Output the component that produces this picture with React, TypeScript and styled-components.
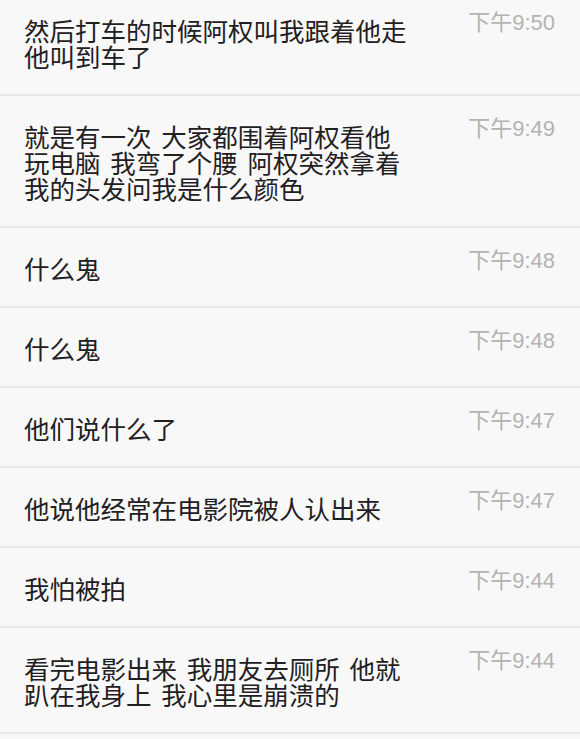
import React from "react";
import styled, { createGlobalStyle } from "styled-components";

const GlobalStyle = createGlobalStyle`
  html, body {
    margin: 0;
    padding: 0;
    background: #f7f8f7;
  }
  body {
    font-family: "Noto Sans CJK SC", "Noto Sans", sans-serif;
  }
`;

const List = styled.div`
  display: flex;
  flex-direction: column;
  width: 580px;
  height: 739px;
  overflow: hidden;
  background: #f7f8f7;
`;

const Row = styled.div`
  display: flex;
  justify-content: space-between;
  align-items: flex-start;
  padding: 27px 25px 25px 24px;
  border-bottom: 2px solid #e6e7e6;
  flex-shrink: 0;

  &:first-child {
    padding-top: 17px;
  }
`;

const Message = styled.div`
  display: flex;
  flex-direction: column;
  font-family: "Noto Sans CJK SC", sans-serif;
  font-size: 25.5px;
  line-height: 26px;
  word-spacing: 4px;
  color: #1f201f;
  white-space: pre;
`;

const Line = styled.span`
  display: block;
`;

const Time = styled.div`
  font-family: "Liberation Sans", "Noto Sans CJK SC", sans-serif;
  font-size: 22px;
  line-height: 24px;
  color: #b2b3b2;
  margin-top: -6px;
  white-space: nowrap;
`;

type Msg = { lines: string[]; time: string };

const messages: Msg[] = [
  { lines: ["然后打车的时候阿权叫我跟着他走", "他叫到车了"], time: "下午9:50" },
  {
    lines: ["就是有一次 大家都围着阿权看他", "玩电脑 我弯了个腰 阿权突然拿着", "我的头发问我是什么颜色"],
    time: "下午9:49",
  },
  { lines: ["什么鬼"], time: "下午9:48" },
  { lines: ["什么鬼"], time: "下午9:48" },
  { lines: ["他们说什么了"], time: "下午9:47" },
  { lines: ["他说他经常在电影院被人认出来"], time: "下午9:47" },
  { lines: ["我怕被拍"], time: "下午9:44" },
  { lines: ["看完电影出来 我朋友去厕所 他就", "趴在我身上 我心里是崩溃的"], time: "下午9:44" },
];

export default function App() {
  return (
    <>
      <GlobalStyle />
      <List>
        {messages.map((m, i) => (
          <Row key={i}>
            <Message>
              {m.lines.map((l, j) => (
                <Line key={j}>{l}</Line>
              ))}
            </Message>
            <Time>{m.time}</Time>
          </Row>
        ))}
      </List>
    </>
  );
}
